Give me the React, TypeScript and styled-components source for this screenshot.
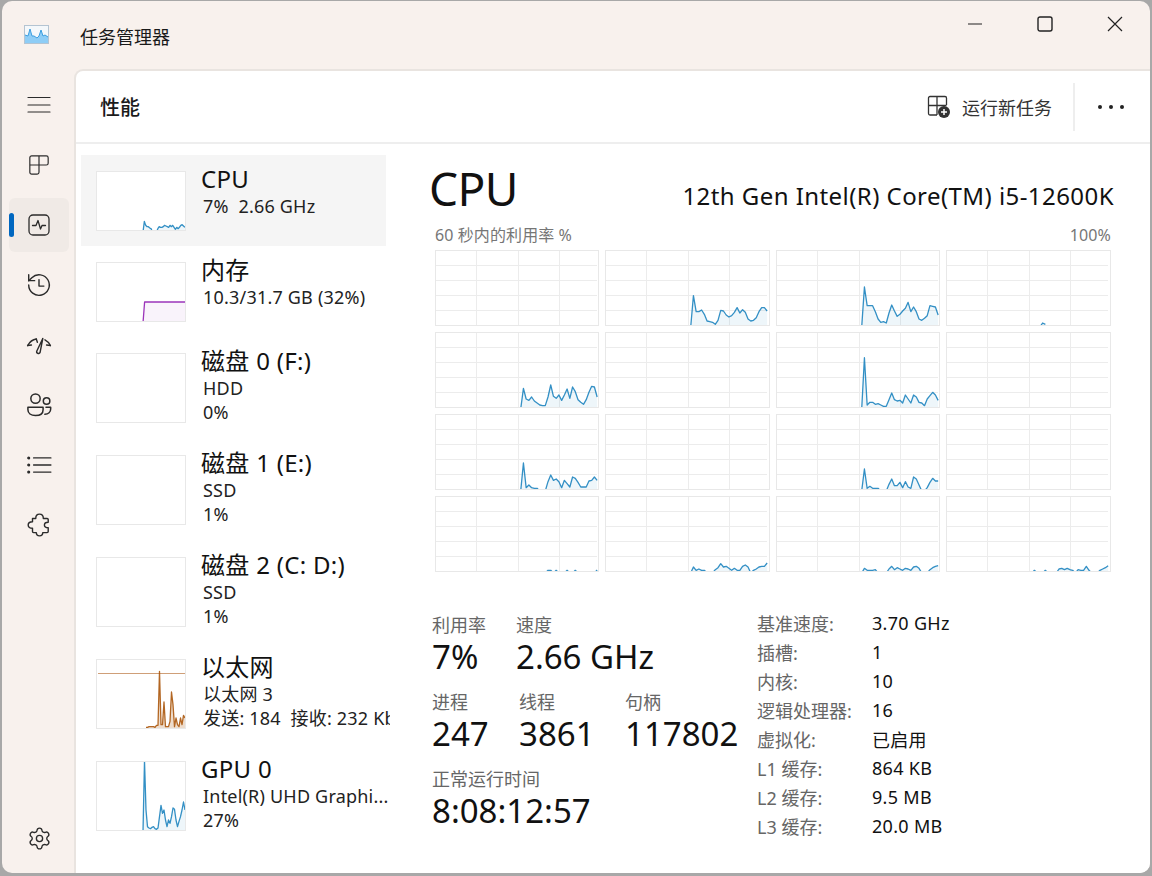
import React from "react";
import styled, { createGlobalStyle } from "styled-components";
import { Settings } from "lucide-react";

const GlobalStyle = createGlobalStyle`
  html, body {
    margin: 0;
    padding: 0;
    height: 876px;
    overflow: hidden;
    background: #a8a8a8;
    font-family: "Noto Sans", "Noto Sans CJK SC", sans-serif;
    color: #111;
  }
`;

const Window = styled.div`
  box-sizing: border-box;
  display: flex;
  flex-direction: column;
  width: 1148px;
  height: 872px;
  margin: 1px 2px 3px;
  background: #f8f1ed;
  border-radius: 10px;
  overflow: hidden;
`;

const TitleBar = styled.div`
  display: flex;
  align-items: center;
  height: 68px;
  flex-shrink: 0;
  padding-left: 22px;
`;

const AppTitle = styled.div`
  margin-left: 30px;
  margin-top: 2px;
  font-size: 18px;
  color: #1a1a1a;
  flex: 1;
`;

const WinButton = styled.div`
  display: flex;
  align-items: center;
  justify-content: center;
  width: 70px;
  height: 44px;
  margin-bottom: 22px;
`;

const Body = styled.div`
  display: flex;
  flex: 1;
  min-height: 0;
`;

const Nav = styled.nav`
  display: flex;
  flex-direction: column;
  width: 72px;
  flex-shrink: 0;
  padding: 9px 0 2px;
`;

const NavItem = styled.div<{ $active?: boolean }>`
  position: relative;
  display: flex;
  align-items: center;
  justify-content: center;
  box-sizing: border-box;
  width: 60px;
  height: 54px;
  margin: 0 0 6px 7px;
  border-radius: 6px;
  background: ${(p) => (p.$active ? "#f0eae6" : "transparent")};
  &::before {
    content: "";
    display: ${(p) => (p.$active ? "block" : "none")};
    position: absolute;
    left: 0;
    top: 15px;
    width: 5px;
    height: 24px;
    border-radius: 3px;
    background: #0067c0;
  }
`;

const NavSpacer = styled.div`
  flex: 1;
`;

const Panel = styled.main`
  flex: 1;
  display: flex;
  flex-direction: column;
  min-width: 0;
  background: #fff;
  border-top: 2px solid #e9e4e0;
  border-left: 2px solid #e9e4e0;
  border-top-left-radius: 9px;
`;

const PageHeader = styled.header`
  display: flex;
  align-items: center;
  box-sizing: border-box;
  height: 73px;
  flex-shrink: 0;
  padding-left: 24px;
  border-bottom: 2px solid #eeeeee;
`;

const PageTitle = styled.h1`
  flex: 1;
  margin: 0;
  font-size: 20px;
  font-weight: 500;
  color: #1a1a1a;
`;

const RunTask = styled.div`
  display: flex;
  align-items: center;
  gap: 11px;
  font-size: 18px;
  color: #333;
  margin-right: 21px;
`;

const HeaderDivider = styled.div`
  width: 2px;
  height: 48px;
  background: #eeeeee;
`;

const MoreButton = styled.div`
  display: flex;
  align-items: center;
  justify-content: center;
  box-sizing: border-box;
  gap: 7px;
  width: 75px;
  padding-right: 3px;
`;

const Dot = styled.span`
  width: 4px;
  height: 4px;
  border-radius: 50%;
  background: #222;
`;

const Content = styled.div`
  display: flex;
  flex: 1;
  min-height: 0;
`;

const Sidebar = styled.aside`
  box-sizing: border-box;
  width: 310px;
  flex-shrink: 0;
  padding: 11px 0 0 5px;
`;

const SideItem = styled.div<{ $active?: boolean; $tall?: boolean }>`
  display: flex;
  box-sizing: border-box;
  width: 305px;
  height: ${(p) => (p.$tall ? 102 : 91)}px;
  padding: 8px 0 0 15px;
  gap: 15px;
  background: ${(p) => (p.$active ? "#f5f5f5" : "transparent")};
`;

const Thumb = styled.div<{ $tall?: boolean }>`
  box-sizing: border-box;
  width: 90px;
  height: ${(p) => (p.$tall ? 70 : 60)}px;
  margin-top: 8px;
  flex-shrink: 0;
  background: #fff;
  border: 1px solid #e8e8e8;
  svg {
    display: block;
  }
`;

const SideText = styled.div`
  width: 189px;
  flex-shrink: 0;
  overflow: hidden;
  white-space: nowrap;
`;

const SideName = styled.div`
  font-size: 24px;
  line-height: 31px;
  letter-spacing: 0.3px;
  color: #111;
`;

const SideLine = styled.div`
  font-size: 18px;
  line-height: 24px;
  margin-left: 2px;
  letter-spacing: 0.2px;
  color: #222;
`;

const Detail = styled.section`
  flex: 1;
  min-width: 0;
  padding: 10px 36px 0 44px;
`;

const DetailHead = styled.div`
  display: flex;
  align-items: flex-start;
  justify-content: space-between;
  height: 69px;
`;

const Heading = styled.div`
  font-size: 46px;
  line-height: 68px;
  margin-left: -1px;
  letter-spacing: -0.6px;
  color: #111;
`;

const Model = styled.div`
  margin-top: 25px;
  font-size: 24px;
  letter-spacing: 0.44px;
  color: #111;
`;

const CaptionRow = styled.div`
  display: flex;
  justify-content: space-between;
  margin: 0 3px 0 5px;
  font-size: 16px;
  line-height: 24px;
  height: 24px;
  letter-spacing: 0.1px;
  color: #767676;
`;

const ChartGrid = styled.div`
  display: grid;
  grid-template-columns: 164px 165px 164px 165px;
  grid-auto-rows: 76px;
  gap: 6px;
  margin: 3px 0 0 5px;
`;

const ChartCell = styled.div`
  box-sizing: border-box;
  border: 1px solid #e8e8e8;
  svg {
    display: block;
  }
`;

const Stats = styled.div`
  display: flex;
  margin: 36px 0 0 2px;
`;

const StatColumn = styled.div`
  width: 325px;
  flex-shrink: 0;
  padding-top: 6px;
`;

const StatRow = styled.div`
  display: flex;
  margin-bottom: 13px;
`;

const Stat = styled.div<{ $width?: number }>`
  width: ${(p) => (p.$width ? `${p.$width}px` : "auto")};
  flex-shrink: 0;
`;

const StatLabel = styled.div`
  font-size: 18px;
  line-height: 22px;
  color: #666;
`;

const StatValue = styled.div`
  font-size: 33px;
  line-height: 42px;
  color: #111;
`;

const Specs = styled.div`
  display: grid;
  grid-template-columns: 115px auto;
  grid-auto-rows: 29px;
  align-items: center;
  font-size: 18px;
`;

const SpecKey = styled.div`
  color: #666;
`;

const SpecValue = styled.div`
  letter-spacing: 0.3px;
  color: #111;
`;

const BLUE = "#117dbb";
const BLUE_FILL = "rgba(17,125,187,0.07)";

type SparkProps = {
  heights: number[];
  start: number;
  step: number;
  height: number;
  color: string;
  fill: string;
};

// heights are read from the 3x crops, so they get divided by 3 here
const Spark = ({ heights, start, step, height, color, fill }: SparkProps) => {
  const pts = heights.map((v, i) => [start + i * step, v === 0 ? height + 2 : height - v / 3]);
  const line = pts.map((p) => p.join(",")).join(" ");
  const last = pts[pts.length - 1];
  const area = `${start},${height + 2} ${line} ${last[0]},${height + 2}`;
  return (
    <>
      <polygon points={area} fill={fill} />
      <polyline
        points={line}
        fill="none"
        stroke={color}
        strokeWidth={1.3}
        strokeOpacity={0.85}
        strokeLinejoin="round"
      />
    </>
  );
};

const CORE_GRAPHS: number[][] = [
  [],
  [0, 88, 40, 40, 45, 32, 12, 10, 8, 2, 14, 44, 42, 30, 24, 28, 38, 52, 36, 46, 38, 18, 12, 14, 22, 40, 52, 52, 42],
  [0, 114, 58, 58, 58, 40, 18, 8, 10, 6, 36, 60, 42, 26, 32, 42, 50, 68, 40, 54, 40, 18, 14, 20, 28, 58, 56, 54, 30],
  [0, 0, 0, 0, 6, 2],
  [0, 56, 24, 20, 30, 18, 12, 6, 4, 4, 30, 66, 32, 26, 36, 20, 36, 54, 26, 60, 46, 22, 14, 8, 22, 44, 62, 60, 30],
  [],
  [0, 148, 6, 14, 14, 8, 10, 6, 2, 2, 22, 42, 22, 18, 20, 12, 36, 24, 12, 36, 30, 14, 12, 4, 24, 34, 44, 36, 20],
  [],
  [0, 78, 4, 12, 4, 2, 2, 0, 0, 0, 22, 42, 26, 30, 22, 4, 26, 16, 6, 36, 32, 20, 6, 6, 6, 24, 26, 36, 26],
  [],
  [0, 60, 2, 8, 2, 2, 2, 0, 0, 0, 14, 30, 10, 10, 20, 4, 22, 6, 2, 36, 30, 12, 0, 0, 4, 20, 32, 24, 24],
  [],
  [0, 0, 0, 0, 0, 0, 0, 0, 0, 0, 2, 2, 0, 2, 0, 0, 0, 2, 0, 0, 2, 0, 0, 0, 0, 0, 0, 0, 3],
  [0, 12, 2, 6, 2, 2, 0, 0, 0, 4, 10, 22, 12, 14, 8, 2, 8, 2, 2, 14, 18, 12, 0, 2, 6, 12, 14, 14, 24],
  [0, 8, 2, 2, 2, 4, 0, 0, 0, 0, 6, 14, 4, 10, 6, 2, 8, 6, 2, 12, 14, 8, 0, 0, 0, 4, 10, 14, 16],
  [0, 2, 0, 0, 0, 2, 0, 0, 0, 0, 6, 8, 4, 8, 4, 2, 0, 4, 2, 2, 14, 2, 0, 0, 0, 2, 6, 10, 16],
];

const CPU_THUMB = [0, 26, 14, 10, 10, 6, 4, 0, 0, 0, 0, 4, 10, 8, 8, 10, 14, 12, 10, 8, 14, 10, 14, 8, 2, 8, 4, 8, 14, 16, 12, 8];
const MEM_THUMB = [0, ...Array(27).fill(57)];
const ETH_THUMB = [2, 2, 4, 4, 4, 4, 2, 8, 8, 170, 10, 10, 78, 4, 4, 4, 20, 108, 70, 4, 30, 10, 4, 30, 10, 38, 30];
const GPU_THUMB = [0, 208, 60, 10, 6, 4, 8, 10, 4, 2, 6, 40, 74, 50, 60, 30, 10, 30, 20, 40, 66, 62, 30, 10, 26, 40, 60, 84, 60];

const CoreChart = ({ heights }: { heights: number[] }) => (
  <svg width="100%" height="100%">
    {[40.5, 82.5, 123.5].map((x) => (
      <line key={x} x1={x} x2={x} y1={0} y2={74} stroke="#ececec" />
    ))}
    {[14.5, 29.5, 44.5, 59.5].map((y) => (
      <line key={y} x1={0} x2={161} y1={y} y2={y} stroke="#ececec" />
    ))}
    {heights.length > 0 && (
      <Spark heights={heights} start={84.7} step={2.73} height={74} color={BLUE} fill={BLUE_FILL} />
    )}
  </svg>
);

const TitleIcon = () => (
  <svg width="26" height="20" viewBox="0 0 26 20">
    <rect x="0.5" y="0.5" width="24" height="18" fill="#f4f8fb" stroke="#b4c4d2" />
    <path d="M1 18V10L4 11 6 4 8 11 10 11 13 13 15 11 17 5 19 11 21 10 24 12V18Z" fill="#8ecdf6" />
    <path d="M1 10L4 11 6 4 8 11 10 11 13 13 15 11 17 5 19 11 21 10 24 12" fill="none" stroke="#3d9fe0" />
  </svg>
);

const Icon = ({ children, size = 24 }: { children: React.ReactNode; size?: number }) => (
  <svg
    width={size}
    height={size}
    viewBox="0 0 24 24"
    fill="none"
    stroke="#2b2b2b"
    strokeWidth={1.3}
    strokeLinecap="round"
    strokeLinejoin="round"
  >
    {children}
  </svg>
);

const TaskGlyph = () => (
  <svg width="24" height="24" viewBox="0 0 24 24" fill="none" stroke="#333" strokeWidth={1.3}>
    <path d="M3 1.5H18a1.5 1.5 0 0 1 1.5 1.5V10M10 1.5V20M1.5 10.5H19.5M1.5 3A1.5 1.5 0 0 1 3 1.5M1.5 3V18.5A1.5 1.5 0 0 0 3 20H10" />
    <circle cx="17" cy="17" r="6" fill="#333" stroke="none" />
    <path d="M17 14V20M14 17H20" stroke="#fff" strokeWidth={1.5} />
  </svg>
);

const SIDE_ITEMS = [
  { name: "CPU", lines: ["7%\u00a0\u00a02.66 GHz"], active: true },
  { name: "内存", lines: ["10.3/31.7 GB (32%)"] },
  { name: "磁盘 0 (F:)", lines: ["HDD", "0%"] },
  { name: "磁盘 1 (E:)", lines: ["SSD", "1%"] },
  { name: "磁盘 2 (C: D:)", lines: ["SSD", "1%"] },
  { name: "以太网", lines: ["以太网 3", "发送: 184\u00a0\u00a0接收: 232 Kbps"] },
  { name: "GPU 0", lines: ["Intel(R) UHD Graphi...", "27%"] },
];

const SPECS = [
  ["基准速度:", "3.70 GHz"],
  ["插槽:", "1"],
  ["内核:", "10"],
  ["逻辑处理器:", "16"],
  ["虚拟化:", "已启用"],
  ["L1 缓存:", "864 KB"],
  ["L2 缓存:", "9.5 MB"],
  ["L3 缓存:", "20.0 MB"],
];

const thumbGraph = (name: string, h: number) => {
  if (name === "CPU")
    return <Spark heights={CPU_THUMB} start={46} step={1.35} height={h} color={BLUE} fill={BLUE_FILL} />;
  if (name === "内存")
    return <Spark heights={MEM_THUMB} start={46} step={1.6} height={h} color="#8b12ae" fill="rgba(139,18,174,0.05)" />;
  if (name === "以太网")
    return (
      <>
        <line x1={1} x2={88} y1={13.5} y2={13.5} stroke="#cf9f78" />
        <Spark heights={ETH_THUMB} start={49} step={1.5} height={h} color="#a74f01" fill="rgba(167,79,1,0.2)" />
      </>
    );
  if (name === "GPU 0")
    return <Spark heights={GPU_THUMB} start={46} step={1.5} height={h} color={BLUE} fill={BLUE_FILL} />;
  return null;
};

const App: React.FC = () => {
  return (
    <Window>
      <GlobalStyle />
      <TitleBar>
        <TitleIcon />
        <AppTitle>任务管理器</AppTitle>
        <WinButton>
          <svg width="16" height="16" viewBox="0 0 16 16">
            <path d="M1 8H15" stroke="#222" strokeWidth={1.1} />
          </svg>
        </WinButton>
        <WinButton>
          <svg width="16" height="16" viewBox="0 0 16 16">
            <rect x="1" y="1" width="14" height="14" rx="2" fill="none" stroke="#222" strokeWidth={1.4} />
          </svg>
        </WinButton>
        <WinButton>
          <svg width="16" height="16" viewBox="0 0 16 16">
            <path d="M1 1L15 15M15 1L1 15" stroke="#222" strokeWidth={1.2} />
          </svg>
        </WinButton>
      </TitleBar>
      <Body>
        <Nav>
          <NavItem>
            <Icon>
              <path d="M1 4.500H23M1 12H23M1 19H23" strokeWidth={1.2} />
            </Icon>
          </NavItem>
          <NavItem>
            <Icon size={22}>
              <path d="M4 2H20A2 2 0 0 1 22 4V10A2 2 0 0 1 20 12H12V20A2 2 0 0 1 10 22H4A2 2 0 0 1 2 20V4A2 2 0 0 1 4 2ZM12 2V12M2 12H12" />
            </Icon>
          </NavItem>
          <NavItem $active>
            <Icon>
              <rect x="2" y="2" width="20" height="20" rx="4" />
              <path d="M5.500 12.500H9L11 7.500 13.500 16 15 12.500H18.500" />
            </Icon>
          </NavItem>
          <NavItem>
            <Icon size={26}>
              <path d="M2.500 12A9.500 9.500 0 1 0 5.400 5.200L2.500 8" />
              <path d="M2.500 2.500V8H8" />
              <path d="M12 7V13H16.500" />
            </Icon>
          </NavItem>
          <NavItem>
            <Icon size={26}>
              <path d="M1.500 12.500C3.500 9 6 7 9.500 6.500M17.500 7.200C19.500 8.200 21.300 10 22.500 12.500" />
              <path d="M1.500 12.500L5 12M22.500 12.500L19 12M9.500 6.500L10.500 9.500" />
              <path d="M15.500 6L10 17.500A1.600 1.600 0 0 0 13 18.800Z" />
            </Icon>
          </NavItem>
          <NavItem>
            <Icon size={28}>
              <circle cx="9" cy="6.500" r="4" />
              <circle cx="18.500" cy="8.500" r="2.800" />
              <path d="M2.500 14H15.500V16C15.500 19 13 21 9 21S2.500 19 2.500 16Z" />
              <path d="M18 14H22V15.500C22 18 20 20 17 20" />
            </Icon>
          </NavItem>
          <NavItem>
            <Icon size={26}>
              <path d="M7 5.500H23M7 12H23M7 18.500H23" strokeWidth={1.2} />
              <circle cx="2.500" cy="5.500" r="0.800" fill="#2b2b2b" />
              <circle cx="2.500" cy="12" r="0.800" fill="#2b2b2b" />
              <circle cx="2.500" cy="18.500" r="0.800" fill="#2b2b2b" />
            </Icon>
          </NavItem>
          <NavItem>
            <Icon size={26}>
              <path d="M6 6H9C9 3.500 10 2 12.500 2S16 3.500 16 6H19.500A1 1 0 0 1 20.500 7V9.500C18 9.500 17 10.500 17 12S18 14.500 20.500 14.500V18A1 1 0 0 1 19.500 19H15.500C15.500 20.500 14.500 22 12.500 22S9.500 20.500 9.500 19H7A1 1 0 0 1 6 18V15C3.500 15 2 14 2 12S3.500 9 6 9Z" />
            </Icon>
          </NavItem>
          <NavSpacer />
          <NavItem>
            <Settings size={25} strokeWidth={1.3} color="#2b2b2b" />
          </NavItem>
        </Nav>
        <Panel>
          <PageHeader>
            <PageTitle>性能</PageTitle>
            <RunTask>
              <TaskGlyph />
              运行新任务
            </RunTask>
            <HeaderDivider />
            <MoreButton>
              <Dot />
              <Dot />
              <Dot />
            </MoreButton>
          </PageHeader>
          <Content>
            <Sidebar>
              {SIDE_ITEMS.map((item) => {
                const tall = item.lines.length > 1;
                return (
                  <SideItem key={item.name} $active={item.active} $tall={tall}>
                    <Thumb $tall={tall}>
                      <svg width="88" height={tall ? 68 : 58}>
                        {thumbGraph(item.name, tall ? 68 : 58)}
                      </svg>
                    </Thumb>
                    <SideText>
                      <SideName>{item.name}</SideName>
                      {item.lines.map((line) => (
                        <SideLine key={line}>{line}</SideLine>
                      ))}
                    </SideText>
                  </SideItem>
                );
              })}
            </Sidebar>
            <Detail>
              <DetailHead>
                <Heading>CPU</Heading>
                <Model>12th Gen Intel(R) Core(TM) i5-12600K</Model>
              </DetailHead>
              <CaptionRow>
                <span>60 秒内的利用率 %</span>
                <span>100%</span>
              </CaptionRow>
              <ChartGrid>
                {CORE_GRAPHS.map((heights, i) => (
                  <ChartCell key={i}>
                    <CoreChart heights={heights} />
                  </ChartCell>
                ))}
              </ChartGrid>
              <Stats>
                <StatColumn>
                  <StatRow>
                    <Stat $width={84}>
                      <StatLabel>利用率</StatLabel>
                      <StatValue>7%</StatValue>
                    </Stat>
                    <Stat>
                      <StatLabel>速度</StatLabel>
                      <StatValue>2.66 GHz</StatValue>
                    </Stat>
                  </StatRow>
                  <StatRow>
                    <Stat $width={87}>
                      <StatLabel>进程</StatLabel>
                      <StatValue>247</StatValue>
                    </Stat>
                    <Stat $width={106}>
                      <StatLabel>线程</StatLabel>
                      <StatValue>3861</StatValue>
                    </Stat>
                    <Stat>
                      <StatLabel>句柄</StatLabel>
                      <StatValue>117802</StatValue>
                    </Stat>
                  </StatRow>
                  <StatRow>
                    <Stat>
                      <StatLabel>正常运行时间</StatLabel>
                      <StatValue>8:08:12:57</StatValue>
                    </Stat>
                  </StatRow>
                </StatColumn>
                <Specs>
                  {SPECS.map(([k, v]) => (
                    <React.Fragment key={k}>
                      <SpecKey>{k}</SpecKey>
                      <SpecValue>{v}</SpecValue>
                    </React.Fragment>
                  ))}
                </Specs>
              </Stats>
            </Detail>
          </Content>
        </Panel>
      </Body>
    </Window>
  );
};

export default App;
